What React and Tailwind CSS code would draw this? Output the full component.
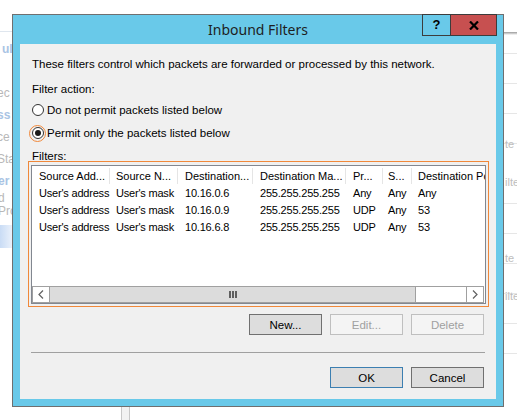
import { useState } from 'react'

// Inbound Filters dialog (Windows 8 style) sitting over a partly hidden console.

const FONT = { fontFamily: '"Segoe UI", "Liberation Sans", Arial, sans-serif' }

const COLS = [
  { w: 'w-[78px]', pl: 'pl-[7px]', head: 'Source Add...' },
  { w: 'w-[68px]', pl: 'pl-[6px]', head: 'Source N...' },
  { w: 'w-[75px]', pl: 'pl-[7px]', head: 'Destination...' },
  { w: 'w-[93px]', pl: 'pl-[7px]', head: 'Destination Ma...' },
  { w: 'w-[37px]', pl: 'pl-[7px]', head: 'Pr...' },
  { w: 'w-[29px]', pl: 'pl-[5px]', head: 'S...' },
  { w: 'w-[80px]', pl: 'pl-[6px]', head: 'Destination Port' },
]

const ROWS = [
  ["User's address", "User's mask", '10.16.0.6', '255.255.255.255', 'Any', 'Any', 'Any'],
  ["User's address", "User's mask", '10.16.0.9', '255.255.255.255', 'UDP', 'Any', '53'],
  ["User's address", "User's mask", '10.16.6.8', '255.255.255.255', 'UDP', 'Any', '53'],
]

function Radio({ checked, focused, label, onClick }) {
  return (
    <div className="flex h-[18px] items-center" onClick={onClick}>
      <div
        className={`flex h-[17px] w-[17px] items-center justify-center rounded-full ${
          focused ? 'border border-[#f0883a]' : 'border border-transparent'
        }`}
      >
        <div className="flex h-[12px] w-[12px] items-center justify-center rounded-full border border-[#333] bg-white">
          {checked && <div className="h-[6px] w-[6px] rounded-full bg-[#1a1a1a]" />}
        </div>
      </div>
      <span className="ml-[1px]">{label}</span>
    </div>
  )
}

function Button({ children, kind = 'normal' }) {
  const cls =
    kind === 'disabled'
      ? 'border-[#bfbfbf] bg-[#f4f4f4] text-[#a0a0a0]'
      : kind === 'default'
        ? 'border-[#3c7fb1] bg-[#dddddd] text-black'
        : 'border-[#707070] bg-[#dddddd] text-black'
  return (
    <div className={`flex h-[21px] w-[73px] items-center justify-center border pt-px ${cls}`}>{children}</div>
  )
}

function Chevron({ dir }) {
  return (
    <svg width="6" height="9" viewBox="0 0 6 9">
      <path
        d={dir === 'left' ? 'M5 0.5 L1 4.5 L5 8.5' : 'M1 0.5 L5 4.5 L1 8.5'}
        fill="none"
        stroke="#606060"
        strokeWidth="1.2"
      />
    </svg>
  )
}

export default function App() {
  const [permit, setPermit] = useState(true)

  return (
    <div className="relative h-[420px] w-[517px] overflow-hidden bg-white text-[11.5px] text-black" style={FONT}>
      {/* bits of the console behind the dialog */}
      <div className="absolute left-0 top-[31px] h-px w-[12px] bg-[#dfe6ee]" />
      <div className="absolute left-0 top-[38px] h-[300px] w-[12px] overflow-hidden">
        <div className="ml-[2px] text-[12px] font-bold leading-[22px] text-[#a9c4e4]">ul</div>
        <div className="ml-[-3px] mt-[22px] text-[12px] leading-[22px] text-[#b8b8b8]">ec</div>
        <div className="ml-[-3px] text-[12px] font-bold leading-[22px] text-[#a9c4e4]">ss</div>
        <div className="ml-[-3px] text-[12px] leading-[22px] text-[#b8b8b8]">ce</div>
        <div className="ml-[-3px] text-[12px] leading-[22px] text-[#b8b8b8]">Sta</div>
        <div className="ml-[-2px] text-[12px] font-bold leading-[22px] text-[#a9c4e4]">er</div>
        <div className="ml-[-2px] text-[12px] leading-[13px] text-[#b8b8b8]">
          d<br />Pro
        </div>
      </div>
      <div className="absolute left-0 top-[225px] h-[23px] w-[12px] bg-gradient-to-r from-[#c9dcf5] to-[#eaf1fb]" />
      <div className="absolute left-[504px] top-[32px] h-[3px] w-[13px] bg-gradient-to-b from-[#9a9a9a] to-white" />
      {[53, 83, 113, 143, 203, 233, 263, 293, 323, 353].map((t) => (
        <div key={t} className="absolute left-[504px] h-px w-[13px] bg-[#e6e6e6]" style={{ top: t }} />
      ))}
      <div className="absolute left-[505px] top-[136px] text-[11px] text-[#bdbdbd]">te</div>
      <div className="absolute left-[505px] top-[174px] text-[11px] text-[#bdbdbd]">ilte</div>
      <div className="absolute left-[505px] top-[250px] text-[11px] text-[#bdbdbd]">te</div>
      <div className="absolute left-[505px] top-[288px] text-[11px] text-[#bdbdbd]">ilte</div>
      <div className="absolute left-[121px] top-[407px] h-[13px] w-[9px] border-x border-[#c8c8c8] bg-[#f2f2f2]" />

      {/* dialog window */}
      <div className="absolute left-[12px] top-[14px] flex h-[393px] w-[492px] flex-col border border-[#6f6f6f] bg-[#69c9e9]">
        <div className="relative flex h-[29px] shrink-0 items-center justify-center">
          <span className="text-[14px] text-[#1e1e1e]" style={{ fontFamily: '"Segoe UI", "Noto Sans", sans-serif' }}>
            Inbound Filters
          </span>
          <div className="absolute right-[6px] top-[-1px] flex h-[22px]">
            <div className="flex w-[29px] items-center justify-center border border-[#3c3c3c] text-[13px] font-bold">
              ?
            </div>
            <div className="ml-[-1px] flex w-[47px] items-center justify-center border border-[#3c3c3c] bg-[#c75050]">
              <svg width="10" height="9" viewBox="0 0 10 9">
                <path d="M1 0.5 L9 8.5 M9 0.5 L1 8.5" stroke="#000" strokeWidth="2.2" />
              </svg>
            </div>
          </div>
        </div>

        <div className="mx-[7px] mb-[7px] flex flex-1 flex-col bg-[#f0f0f0] leading-[15px]">
          <div className="pl-[12px] pt-[13px]">
            These filters control which packets are forwarded or processed by this network.
          </div>
          <div className="mt-[10px] pl-[12px]">Filter action:</div>
          <div className="mt-[4px] pl-[9px]">
            <Radio checked={!permit} label="Do not permit packets listed below" onClick={() => setPermit(false)} />
          </div>
          <div className="mt-[5px] pl-[9px]">
            <Radio checked={permit} focused label="Permit only the packets listed below" onClick={() => setPermit(true)} />
          </div>
          <div className="mt-[8px] h-[12px] pl-[12px] leading-[12px]">Filters:</div>

          <div className="ml-[8px] mt-[-1px] h-[146px] w-[461px] border border-[#f0883a] px-[2px] pt-[3px]">
            <div className="flex h-[139px] w-[455px] flex-col overflow-hidden border border-[#828790] bg-white text-[11px]">
              <div className="flex h-[18px] shrink-0 pt-[2px]">
                {COLS.map((c) => (
                  <div
                    key={c.head}
                    className={`${c.w} ${c.pl} shrink-0 overflow-hidden whitespace-nowrap border-r border-[#e5e5e5] leading-[16px]`}
                  >
                    {c.head}
                  </div>
                ))}
              </div>
              {ROWS.map((r, i) => (
                <div key={i} className="flex h-[17px] shrink-0 pt-[2px] tracking-[-0.2px]">
                  {r.map((v, j) => (
                    <div key={j} className={`${COLS[j].w} ${COLS[j].pl} shrink-0 whitespace-nowrap leading-[15px]`}>
                      {v}
                    </div>
                  ))}
                </div>
              ))}

              {/* horizontal scrollbar */}
              <div className="mt-auto flex h-[17px] w-[452px] shrink-0 border border-[#a0a0a0]">
                <div className="flex w-[17px] items-center justify-center border-r border-[#a0a0a0]">
                  <Chevron dir="left" />
                </div>
                <div className="flex w-[366px] items-center justify-center gap-[1px] border-r border-[#a0a0a0] bg-[#dcdcdc]">
                  <div className="h-[7px] w-[2px] bg-[#606060]" />
                  <div className="h-[7px] w-[2px] bg-[#606060]" />
                  <div className="h-[7px] w-[2px] bg-[#606060]" />
                </div>
                <div className="flex-1 bg-white" />
                <div className="flex w-[17px] items-center justify-center border-l border-[#a0a0a0]">
                  <Chevron dir="right" />
                </div>
              </div>
            </div>
          </div>

          <div className="mt-[7px] flex justify-end gap-[8px] pr-[12px]">
            <Button>New...</Button>
            <Button kind="disabled">Edit...</Button>
            <Button kind="disabled">Delete</Button>
          </div>

          <div className="ml-[11px] mr-[11px] mt-[17px] h-px bg-[#a0a0a0]" />

          <div className="mt-[14px] flex justify-end gap-[8px] pr-[12px]">
            <Button kind="default">OK</Button>
            <Button>Cancel</Button>
          </div>
        </div>
      </div>
    </div>
  )
}
